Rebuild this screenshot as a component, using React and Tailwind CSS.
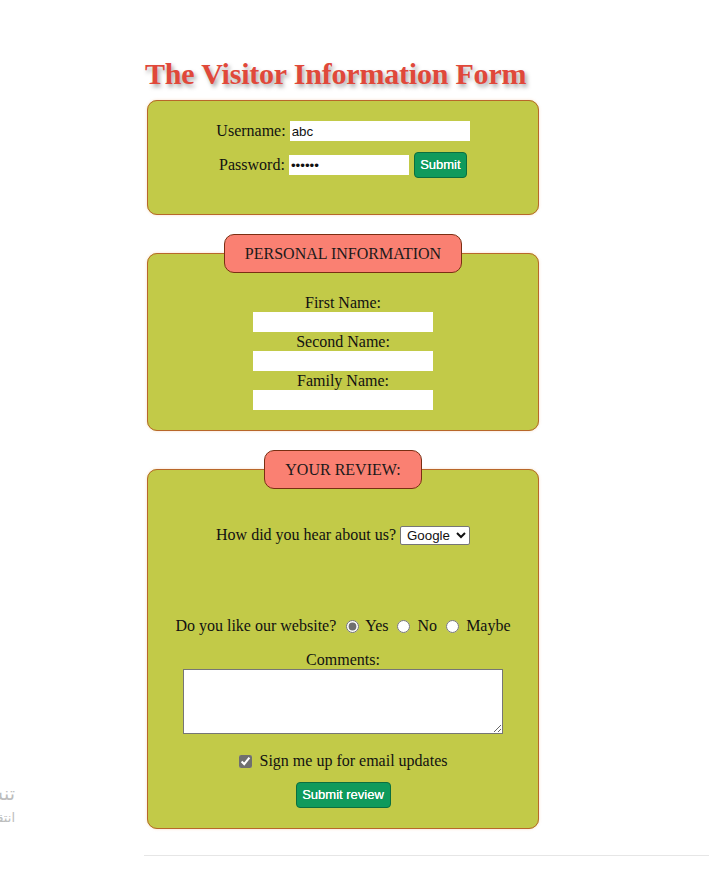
const serif = { fontFamily: '"Liberation Serif", "Times New Roman", serif' }
const sans = { fontFamily: '"Liberation Sans", Arial, sans-serif' }

const FieldBox = ({ legend, children, className = '' }) => (
  <fieldset
    className={`w-[392px] ml-[3px] bg-[#c2ca48] border border-[#b8672a] rounded-[10px] shadow-[0_0_3px_rgba(230,150,90,0.35)] text-center ${className}`}
  >
    {legend && (
      <legend className="mx-auto px-[20px] py-[10px] bg-[#fa8072] border border-[#7a2e12] rounded-[10px] text-[16px] leading-[17px] text-[#1a1a1a]">
        {legend}
      </legend>
    )}
    {children}
  </fieldset>
)

const App = () => {
  return (
    <div className="relative min-h-[870px] bg-white overflow-hidden text-[#111]" style={serif}>
      {/* windows watermark, clipped at the left edge */}
      <div
        dir="rtl"
        className="absolute right-[694px] top-[780px] whitespace-nowrap text-[#bdbdbd]"
        style={{ fontFamily: '"DejaVu Sans", sans-serif' }}
      >
        <div className="text-[19px] leading-[26px]">تنشيط Windows</div>
        <div className="text-[13px] leading-[18px] mt-[3px]">انتقل إلى الإعدادات لتنشيط Windows.</div>
      </div>

      <div className="pl-[144px] pt-[54px]">
        <h1 className="ml-[1px] text-[30px] leading-[40px] font-bold text-[#e0483a] tracking-[-0.2px] [text-shadow:2px_3px_4px_rgba(0,0,0,0.35)]">
          The Visitor Information Form
        </h1>

        {/* login */}
        <FieldBox className="mt-[6px] pt-[20px] pb-[36px]">
          <div className="flex items-center justify-center h-[20px] text-[16px]">
            <span className="mr-[4px]">Username:</span>
            <input
              type="text"
              defaultValue="abc"
              className="w-[180px] h-[20px] bg-white px-[2px] text-[13.33px] outline-none"
              style={sans}
            />
          </div>
          <div className="flex items-center justify-center h-[26px] mt-[11px] text-[16px]">
            <span className="mr-[4px]">Password:</span>
            <input
              type="password"
              defaultValue="abcdef"
              className="w-[120px] h-[20px] bg-white px-[2px] text-[13.33px] outline-none"
              style={sans}
            />
            <button
              className="ml-[5px] w-[53px] h-[26px] bg-[#0f9a5c] border border-[#0b6e3f] rounded-[4px] text-white text-[13px] whitespace-nowrap [text-shadow:0_0_0.4px_#fff]"
              style={sans}
            >
              Submit
            </button>
          </div>
        </FieldBox>

        {/* personal information */}
        <FieldBox legend="PERSONAL INFORMATION" className="mt-[19px] pt-[20px] pb-[20px]">
          {['First Name:', 'Second Name:', 'Family Name:'].map((label) => (
            <div key={label} className="flex flex-col items-center">
              <label className="text-[16px] leading-[19px]">{label}</label>
              <input type="text" className="w-[180px] h-[20px] bg-white outline-none" />
            </div>
          ))}
        </FieldBox>

        {/* review */}
        <FieldBox legend="YOUR REVIEW:" className="mt-[19px] pt-[36px] pb-[20px]">
          <div className="flex items-center justify-center h-[20px] text-[16px]">
            <span className="mr-[4px]">How did you hear about us?</span>
            <select
              defaultValue="Google"
              className="w-[70px] h-[19px] bg-white border border-[#767676] rounded-[2px] text-[13.33px] pl-[2px]"
              style={sans}
            >
              <option>Google</option>
              <option>Facebook</option>
              <option>Friend</option>
            </select>
          </div>

          <div className="flex items-center justify-center h-[20px] mt-[71px] text-[16px]">
            <span>Do you like our website?</span>
            <input type="radio" name="like" defaultChecked className="ml-[10px] mr-[6px] w-[13px] h-[13px] accent-[#6f6f6f]" />
            <span>Yes</span>
            <input type="radio" name="like" className="ml-[8px] mr-[8px] w-[13px] h-[13px] accent-[#6f6f6f]" />
            <span>No</span>
            <input type="radio" name="like" className="ml-[9px] mr-[7px] w-[13px] h-[13px] accent-[#6f6f6f]" />
            <span>Maybe</span>
          </div>

          <div className="flex flex-col items-center mt-[15px]">
            <label className="text-[16px] leading-[18px]">Comments:</label>
            <textarea className="block w-[320px] h-[65px] bg-white border border-[#767676] outline-none" />
          </div>

          <div className="flex items-center justify-center h-[20px] mt-[17px] text-[16px]">
            <input type="checkbox" defaultChecked className="mr-[8px] w-[13px] h-[13px] accent-[#6f6f6f]" />
            <span>Sign me up for email updates</span>
          </div>

          <div className="flex justify-center mt-[11px]">
            <button
              className="w-[95px] h-[26px] bg-[#0f9a5c] border border-[#0b6e3f] rounded-[4px] text-white text-[13px] whitespace-nowrap [text-shadow:0_0_0.4px_#fff]"
              style={sans}
            >
              Submit review
            </button>
          </div>
        </FieldBox>

        <div className="mt-[26px] border-t border-[#e6e6e6]" />
      </div>
    </div>
  )
}

export default App
